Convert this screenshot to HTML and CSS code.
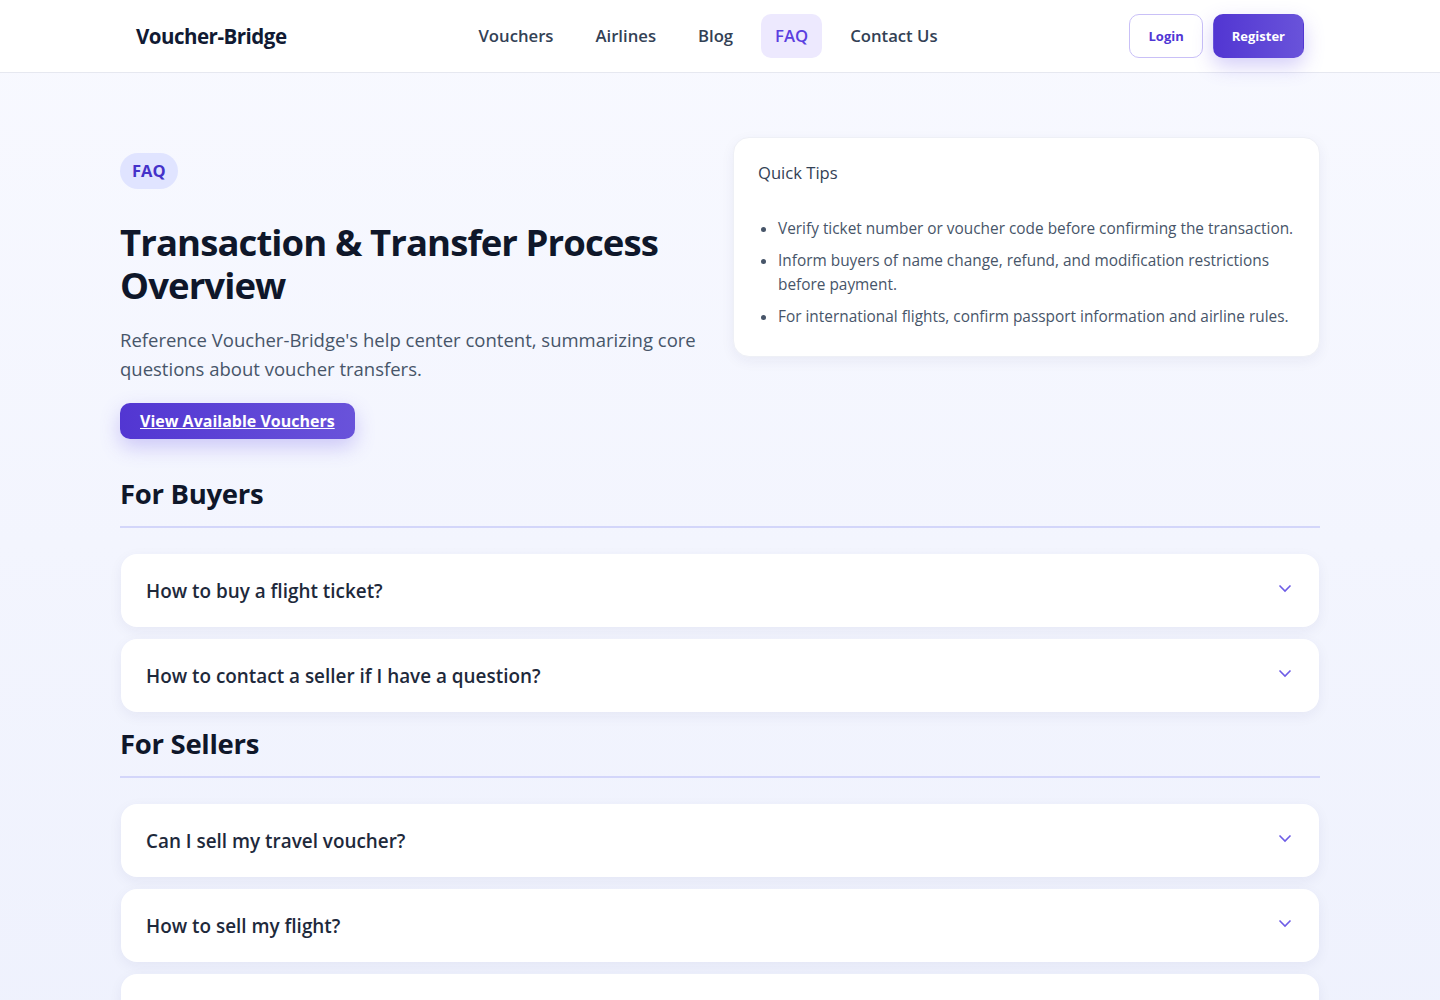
FILE: index.html
```html
<!DOCTYPE html>
<html lang="en">
<head>
  <meta charset="UTF-8">
  <meta name="viewport" content="width=device-width, initial-scale=1.0">
  <title>FAQ - Voucher-Bridge</title>
  <link rel="stylesheet" href="styles.css">
</head>
<body>
  <header class="site-header">
    <div class="header-inner">
      <a class="logo" href="#">Voucher-Bridge</a>
      <nav class="main-nav">
        <a href="#">Vouchers</a>
        <a href="#">Airlines</a>
        <a href="#">Blog</a>
        <a href="#" class="active">FAQ</a>
        <a href="#">Contact Us</a>
      </nav>
      <div class="auth">
        <a href="#" class="btn-login">Login</a>
        <a href="#" class="btn-register">Register</a>
      </div>
    </div>
  </header>

  <main class="container">
    <section class="hero">
      <div class="hero-text">
        <span class="badge">FAQ</span>
        <h1>Transaction &amp; Transfer Process Overview</h1>
        <p>Reference Voucher-Bridge's help center content, summarizing core questions about voucher transfers.</p>
        <a href="#" class="btn-primary">View Available Vouchers</a>
      </div>
      <aside class="tips">
        <h3>Quick Tips</h3>
        <ul>
          <li>Verify ticket number or voucher code before confirming the transaction.</li>
          <li>Inform buyers of name change, refund, and modification restrictions before payment.</li>
          <li>For international flights, confirm passport information and airline rules.</li>
        </ul>
      </aside>
    </section>

    <section class="faq-section">
      <h2>For Buyers</h2>
      <div class="faq-list">
        <div class="faq-item">
          <span>How to buy a flight ticket?</span>
          <svg class="chev" viewBox="0 0 16 16"><path d="M2.5 5.5 8 11l5.5-5.5"/></svg>
        </div>
        <div class="faq-item">
          <span>How to contact a seller if I have a question?</span>
          <svg class="chev" viewBox="0 0 16 16"><path d="M2.5 5.5 8 11l5.5-5.5"/></svg>
        </div>
      </div>
    </section>

    <section class="faq-section">
      <h2>For Sellers</h2>
      <div class="faq-list">
        <div class="faq-item">
          <span>Can I sell my travel voucher?</span>
          <svg class="chev" viewBox="0 0 16 16"><path d="M2.5 5.5 8 11l5.5-5.5"/></svg>
        </div>
        <div class="faq-item">
          <span>How to sell my flight?</span>
          <svg class="chev" viewBox="0 0 16 16"><path d="M2.5 5.5 8 11l5.5-5.5"/></svg>
        </div>
        <div class="faq-item">
          <span>What happens after my voucher is sold?</span>
          <svg class="chev" viewBox="0 0 16 16"><path d="M2.5 5.5 8 11l5.5-5.5"/></svg>
        </div>
      </div>
    </section>
  </main>
</body>
</html>
```

FILE: styles.css
```css
body {
  font-family: "Open Sans", "Noto Sans", sans-serif;
  margin: 0;
  padding: 0;
  color: #0f172a;
  background: linear-gradient(180deg, #f8f9ff 0%, #eef1fd 100%);
  min-height: 100vh;
}
a {
  text-decoration: none;
  color: inherit;
}
.site-header {
  background: #fff;
  border-bottom: 1px solid #e6e8f0;
}
.header-inner {
  max-width: 1168px;
  margin: 0 auto;
  height: 72px;
  display: flex;
  align-items: center;
  justify-content: space-between;
}
.logo {
  font-size: 20.5px;
  font-weight: 700;
  color: #111a33;
  letter-spacing: -0.5px;
}
.main-nav {
  display: flex;
  gap: 14px;
}
.main-nav a {
  padding: 0 14px;
  height: 44px;
  line-height: 44px;
  border-radius: 10px;
  font-size: 16.7px;
  font-weight: 600;
  color: #334155;
}
.main-nav a.active {
  background: #ede9fe;
  color: #5b3fe0;
}
.auth {
  display: flex;
  gap: 10px;
}
.btn-login, .btn-register {
  height: 44px;
  line-height: 42px;
  padding: 0 18px;
  border-radius: 10px;
  font-size: 13px;
  font-weight: 700;
  box-sizing: border-box;
}
.btn-login {
  border: 1px solid #c9c0f7;
  color: #4f36d4;
  background: #fff;
}
.btn-register {
  border: 1px solid transparent;
  color: #fff;
  background: linear-gradient(90deg, #5236d2, #6953da);
  box-shadow: 0 8px 20px rgba(99, 80, 230, 0.28);
}
.container {
  max-width: 1200px;
  margin: 0 auto;
  padding: 64px 0 40px;
}
.hero {
  display: grid;
  grid-template-columns: 1fr 1fr;
  gap: 26px;
  align-items: start;
}
.hero-text {
  padding-top: 16px;
}
.badge {
  display: inline-block;
  height: 36px;
  line-height: 36px;
  padding: 0 12px;
  border-radius: 18px;
  background: #e0e4ff;
  color: #4432c9;
  font-size: 16.5px;
  font-weight: 700;
}
.hero h1 {
  font-size: 36.5px;
  line-height: 43px;
  margin: 32px 0 18px;
  font-weight: 700;
  color: #0f172a;
  letter-spacing: -0.9px;
}
.hero p {
  font-size: 18.5px;
  line-height: 29px;
  color: #475569;
  margin: 0 0 20px;
}
.btn-primary {
  display: inline-block;
  height: 36px;
  line-height: 36px;
  padding: 0 20px;
  border-radius: 10px;
  background: linear-gradient(90deg, #5236d2, #6953da);
  color: #fff;
  font-size: 16px;
  font-weight: 700;
  text-decoration: underline;
  box-shadow: 0 8px 20px rgba(99, 80, 230, 0.28);
}
.tips {
  background: #fff;
  border-radius: 16px;
  border: 1px solid #eef0f6;
  box-shadow: 0 4px 14px rgba(30, 41, 99, 0.06);
  padding: 23px 24px 27px;
}
.tips h3 {
  margin: 0;
  font-size: 16.6px;
  font-weight: 400;
  line-height: 24px;
  color: #334155;
}
.tips ul {
  margin: 32px 0 0;
  padding-left: 20px;
}
.tips li {
  font-size: 15.4px;
  line-height: 24px;
  color: #475569;
  margin-bottom: 8px;
}
.tips li:last-child {
  margin-bottom: 0;
}
.faq-section {
  margin-top: 38px;
}
.faq-section + .faq-section {
  margin-top: 15px;
}
.faq-section h2 {
  margin: 0 0 26px;
  font-size: 27.5px;
  line-height: 34px;
  font-weight: 700;
  padding-bottom: 15px;
  border-bottom: 2px solid #d3d6fa;
  letter-spacing: -0.3px;
}
.faq-list {
  display: flex;
  flex-direction: column;
  gap: 12px;
}
.faq-item {
  height: 73px;
  margin: 0 1px;
  padding: 0 26px 0 25px;
  background: #fff;
  border-radius: 16px;
  box-shadow: 0 4px 14px rgba(30, 41, 99, 0.06);
  display: flex;
  align-items: center;
  justify-content: space-between;
  font-size: 18.9px;
  font-weight: 600;
  color: #1e293b;
}
.chev {
  width: 16px;
  height: 16px;
  margin-top: -5px;
  fill: none;
  stroke: #6d5ce6;
  stroke-width: 1.6;
}
```
